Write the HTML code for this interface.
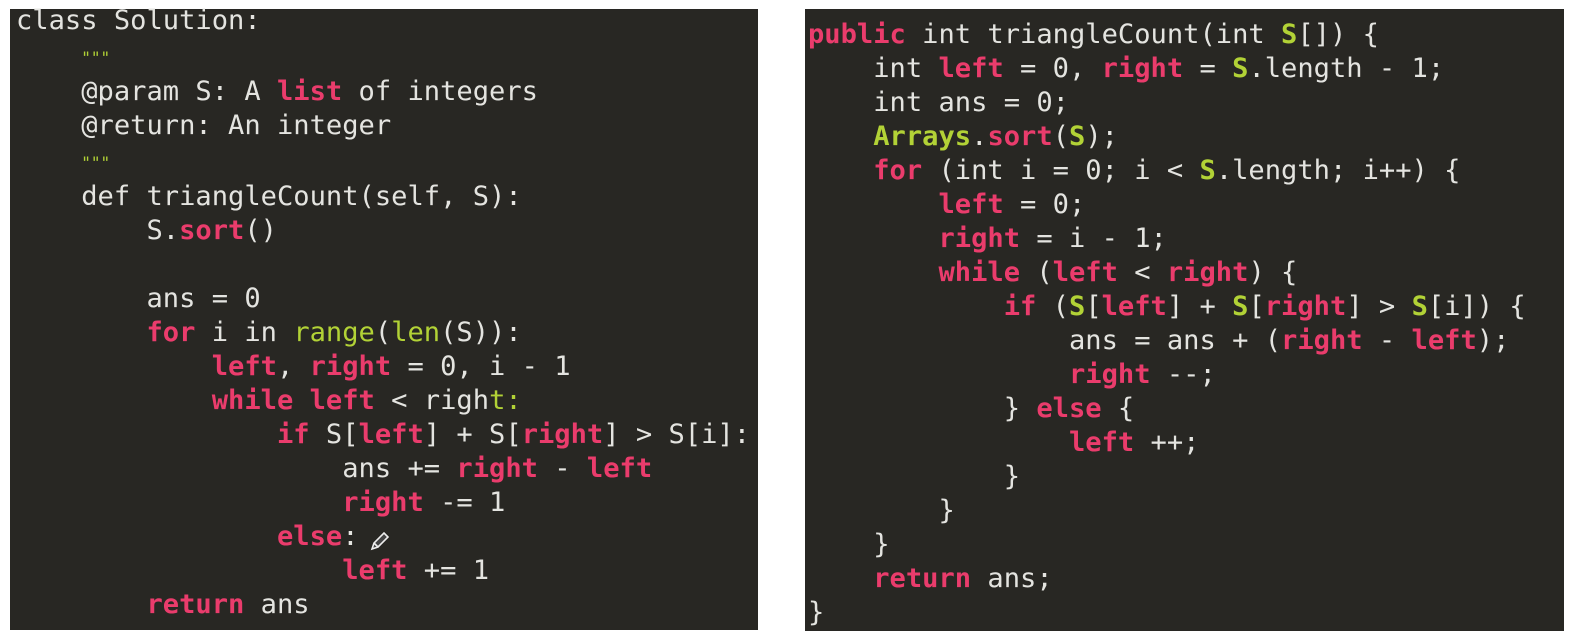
<!DOCTYPE html>
<html><head><style>
html,body{margin:0;padding:0;background:#fff;width:1574px;height:639px;overflow:hidden;position:relative}
.p{position:absolute;background:#282723}
pre{position:absolute;margin:0;font-family:"DejaVu Sans Mono","Liberation Mono",monospace;font-size:27.1px;line-height:34px;color:#e4e4e0}
.k{color:#ea3c6c;font-weight:bold}
.g{color:#b2d236}
.gb{color:#b2d236;font-weight:bold}
.q{color:#b2d236;font-size:16px}
</style></head><body>
<div class="p" style="left:10px;top:9px;width:748px;height:621px"></div>
<div class="p" style="left:805px;top:9px;width:759px;height:622px"></div>
<pre style="left:16px;top:4px">class Solution:
    <span class="q">"""</span>
    @param S: A <span class="k">list</span> of integers
    @return: An integer
    <span class="q">"""</span>
    def triangleCount(self, S):
        S.<span class="k">sort</span>()

        ans = 0
        <span class="k">for</span> i in <span class="g">range</span>(<span class="g">len</span>(S)):
            <span class="k">left</span>, <span class="k">right</span> = 0, i - 1
            <span class="k">while</span> <span class="k">left</span> &lt; righ<span class="g">t:</span>
                <span class="k">if</span> S[<span class="k">left</span>] + S[<span class="k">right</span>] &gt; S[i]:
                    ans += <span class="k">right</span> - <span class="k">left</span>
                    <span class="k">right</span> -= 1
                <span class="k">else</span>:
                    <span class="k">left</span> += 1
        <span class="k">return</span> ans</pre>
<svg style="position:absolute;left:369px;top:530px" width="22" height="22" viewBox="0 0 22 22"><path d="M3 19 L5 13 L15 3 L19 7 L9 17 Z M5 13 L9 17" fill="#444" stroke="#eee" stroke-width="1.6"/></svg>
<pre style="left:808px;top:18px"><span class="k">public</span> int triangleCount(int <span class="gb">S</span>[]) {
    int <span class="k">left</span> = 0, <span class="k">right</span> = <span class="gb">S</span>.length - 1;
    int ans = 0;
    <span class="gb">Arrays</span>.<span class="k">sort</span>(<span class="gb">S</span>);
    <span class="k">for</span> (int i = 0; i &lt; <span class="gb">S</span>.length; i++) {
        <span class="k">left</span> = 0;
        <span class="k">right</span> = i - 1;
        <span class="k">while</span> (<span class="k">left</span> &lt; <span class="k">right</span>) {
            <span class="k">if</span> (<span class="gb">S</span>[<span class="k">left</span>] + <span class="gb">S</span>[<span class="k">right</span>] &gt; <span class="gb">S</span>[i]) {
                ans = ans + (<span class="k">right</span> - <span class="k">left</span>);
                <span class="k">right</span> --;
            } <span class="k">else</span> {
                <span class="k">left</span> ++;
            }
        }
    }
    <span class="k">return</span> ans;
}</pre>
</body></html>
